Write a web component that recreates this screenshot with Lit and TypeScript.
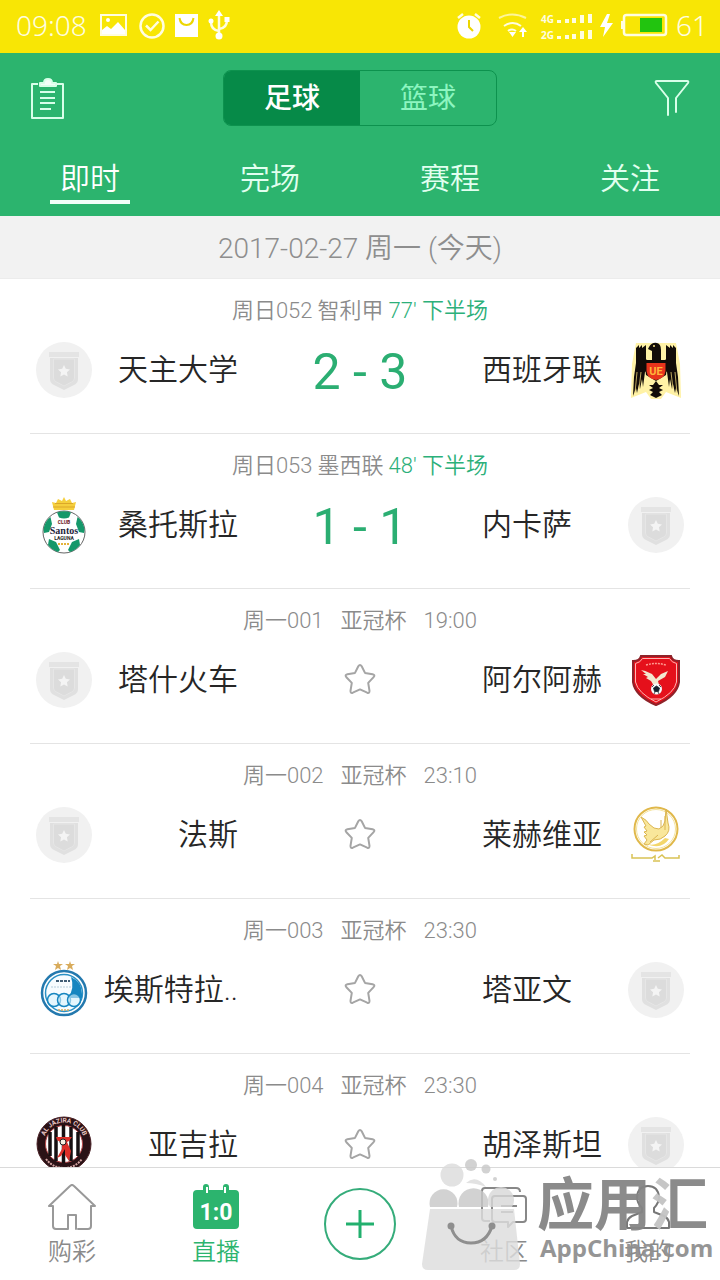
import { LitElement, html, svg, css } from "lit";
import { customElement } from "lit/decorators.js";
import { classMap } from "lit/directives/class-map.js";

interface Match {
  no: string;
  league: string;
  time: string;
  phase?: string;
  score?: string;
  home: string;
  homeCrest?: string;
  away: string;
  awayCrest?: string;
}

const MATCHES: Match[] = [
  { no: "周日052", league: "智利甲", time: "77'", phase: "下半场", score: "2 - 3", home: "天主大学", away: "西班牙联", awayCrest: "eagle" },
  { no: "周日053", league: "墨西联", time: "48'", phase: "下半场", score: "1 - 1", home: "桑托斯拉", homeCrest: "santos", away: "内卡萨" },
  { no: "周一001", league: "亚冠杯", time: "19:00", home: "塔什火车", away: "阿尔阿赫", awayCrest: "red" },
  { no: "周一002", league: "亚冠杯", time: "23:10", home: "法斯", away: "莱赫维亚", awayCrest: "gold" },
  { no: "周一003", league: "亚冠杯", time: "23:30", home: "埃斯特拉..", homeCrest: "blue", away: "塔亚文" },
  { no: "周一004", league: "亚冠杯", time: "23:30", home: "亚吉拉", homeCrest: "stripes", away: "胡泽斯坦" },
];

const CRESTS: Record<string, unknown> = {
  none: svg`
    <circle cx="28" cy="28" r="28" fill="#f1f1f1"/>
    <path d="M13 10h30v5H13z" fill="#e4e4e4"/>
    <path d="M14 16h28v21q0 4-4 6l-10 5-10-5q-4-2-4-6z" fill="#e0e0e0"/>
    <path d="M17.500 17h21v19q0 3-3 4L28 44l-7.500-4q-3-1-3-4z" fill="#dcdcdc" stroke="#e6e6e6"/>
    <path d="M28 23l1.800 3.800 4.200.6-3.100 2.900.8 4.200-3.700-2.100-3.700 2.100.8-4.200-3.100-2.900 4.200-.6z" fill="#f4f4f4"/>`,
  eagle: svg`
    <path d="M3 56L4 22 8 1h40l4 21 1 34-15-6-5 7H23l-5-7z" fill="#fff2a6"/>
    <path d="M8 6l3-3v3l3-3v3l4-3v14l2 3v8l-3 2-2 15-1-8-2 10-1-5-2 9-1-5-3 8 1-19 2-14z" fill="#120c08"/>
    <path d="M48 6l-3-3v3l-3-3v3l-4-3v14l-2 3v8l3 2 2 15 1-8 2 10 1-5 2 9 1-5 3 8-1-19-2-14z" fill="#120c08"/>
    <path d="M21 5q3-5 8-4 4 1 4 7v14h-9V9l-4-2z" fill="#120c08"/>
    <circle cx="26" cy="4" r="1" fill="#ffe98a"/>
    <path d="M9 30l-2 21M13 30l-2 17M47 30l2 21M43 30l2 17" stroke="#e9cf73" stroke-width=".8"/>
    <path d="M16 18h24l-2 15-10 6-10-6z" fill="#120c08"/>
    <path d="M18.500 21h19v8q-1 8-9.500 9-8.500-1-9.500-9z" fill="#e8341c"/>
    <text x="28" y="33" text-anchor="middle" font-size="11" font-weight="700" fill="#ffb53a">UE</text>
    <path d="M28 39l3 4h4l-4 3 4 2-4 2 3 3-6 3-6-3 3-3-4-2 4-2-4-3h4z" fill="#120c08"/>`,
  santos: svg`
    <path d="M18 13l-2-8 4 1 2-4 4 2 2-4 2 4 4-2 2 4 4-1-2 8z" fill="#f5cf3d"/>
    <path d="M17 10h22M19 6.500h18" stroke="#dca728"/>
    <circle cx="28" cy="35" r="21" fill="#fff" stroke="#666" stroke-width="1"/>
    <g fill="#15986a">
      <path d="M21 15.500q7-2.500 14 0l-2 5q-5 2-10 0z"/>
      <path d="M7.500 33q1-9 7-13l1.500 7-3 8-5 1z"/>
      <path d="M48.500 33q-1-9-7-13l-1.500 7 3 8 5 1z"/>
      <path d="M12 48l1-6 7 3 4 8-2 2q-6-2-10-7z"/>
      <path d="M44 48l-1-6-7 3-4 8 2 2q6-2 10-7z"/>
    </g>
    <g text-anchor="middle" font-weight="700">
      <text x="28" y="27" font-size="5" fill="#6b2020">CLUB</text>
      <text class="serif" x="28" y="37" font-size="10" fill="#1f2740">Santos</text>
      <text x="28" y="43" font-size="5" fill="#222">LAGUNA</text>
    </g>
    <path d="M22 47h12" stroke="#e4b33a" stroke-width="2" stroke-dasharray="2 1"/>`,
  red: svg`
    <path d="M13 4h30q1 5 8 5v21q-2 14-23 23Q7 44 5 30V9q7 0 8-5z" fill="#e5101b" stroke="#8f2229" stroke-width="2"/>
    <path d="M14.500 6.500h27q2 4 7 5v18.500q-2 11-20.500 20Q10 41 7.500 30V11.500q5-1 7-5z" fill="none" stroke="#ffb4b0" stroke-width="1"/>
    <path d="M18 13q10-3 20 0" fill="none" stroke="#ff9a8f" stroke-width="1.500" stroke-dasharray="2 1"/>
    <path d="M15 18l9 4 4 5 5-5 7-3-3 6-7 4 1 4-5 1-3-5-5-3 2-1-5-3 3 0-5-4 4 1z" fill="#f3e6cf"/>
    <circle cx="28.500" cy="37" r="5.500" fill="#f7fafb"/>
    <path d="M28.500 34l3 2-1 3.500h-4l-1-3.500zM24 35l2-2M33 35l-2-2M26 42l1-2M31 42l-1-2" fill="#15202c" stroke="#15202c" stroke-width=".8"/>
    <path d="M23 47h10" stroke="#ffb4b0" stroke-width="1"/>`,
  gold: svg`
    <circle cx="28" cy="22" r="21.500" fill="none" stroke="#e0b84a" stroke-width="2"/>
    <circle cx="28" cy="22" r="19.500" fill="none" stroke="#f5e39c" stroke-width="1"/>
    <path d="M13 10q6 3 8 7l5 4 5 1q5-2 6-8l1-12 2 14q3 8-3 13-4 4-11 4l-6 5-4-1 3-4-3-4 3-1-3-3 3-1-3-4 2-1z" fill="#f9e79b" stroke="#dbb550" stroke-width="1"/>
    <path d="M17 36q10 5 20-5l4 1q-8 12-24 4z" fill="#f3d66b"/>
    <path d="M22 35l8-7M33 13v8M37 9v14" stroke="#dbb550" fill="none"/>
    <path d="M4 47v4h20l3-2v4M51 48v3H37l-3-3-4 3M25 54h7" fill="none" stroke="#d9c254" stroke-width="1.500"/>`,
  blue: svg`
    <path d="M22-1l1 3h4l-3 2 1 4-3-2-3 2 1-4-3-2h4zM34-1l1 3h4l-3 2 1 4-3-2-3 2 1-4-3-2h4z" fill="#d8ab5b"/>
    <circle cx="28" cy="31" r="22" fill="#fff" stroke="#2479ae" stroke-width="2.500"/>
    <circle cx="28" cy="31" r="18.500" fill="#f7fcff" stroke="#2b91c5" stroke-width="1.500"/>
    <path d="M35 15q11 5 11 17v4H32q7-10 3-21z" fill="#1686c0"/>
    <path d="M20 19h14" stroke="#405d75" stroke-width="2" stroke-dasharray="3 1"/>
    <path d="M15 25h20" stroke="#b4cddb" stroke-dasharray="2 1"/>
    <g fill="#d8f2fc" fill-opacity=".6" stroke="#1686c0" stroke-width="1.500">
      <circle cx="18" cy="38" r="6.500"/><circle cx="28" cy="38" r="6.500"/><circle cx="38" cy="38" r="6.500"/>
    </g>
    <path d="M22 48h12" stroke="#d8ab5b" stroke-width="1.500" stroke-dasharray="2 1"/>`,
  stripes: svg`
    <circle cx="28" cy="27" r="27" fill="#2a1216" stroke="#4b2227" stroke-width="1"/>
    <circle cx="28" cy="27" r="18.500" fill="#fff" stroke="#b8484a" stroke-width="1"/>
    <path d="M14 15v24M20 10v34M27.500 8v38M35 10v34M42 15v24" stroke="#161012" stroke-width="3.500"/>
    <path d="M20 20h16l-3 4-2 1 4 9-2 10-4-6 0-6-4 7-4 2 5-9v-6l-5-3z" fill="#dc2f28"/>
    <circle cx="27" cy="25" r="3" fill="#f5efdf" stroke="#222"/>
    <path id="arc" d="M7.500 26a20.500 20.500 0 0 1 41 0" fill="none"/>
    <text font-size="6.500" font-weight="700" fill="#e8c5c2"><textPath href="#arc" startOffset="50%" text-anchor="middle">AL JAZIRA CLUB</textPath></text>
    <path d="M10 42q7 9 18 9t18-9" fill="none" stroke="#d5a5a3" stroke-width="2" stroke-dasharray="2 1"/>`,
};

@customElement("match-row")
export class MatchRow extends LitElement {
  static properties = { match: { attribute: false }, starred: { state: true } };
  declare match: Match;
  declare starred: boolean;

  constructor() {
    super();
    this.starred = false;
  }

  static styles = css`
    :host { display: block; padding: 0 30px; }
    .row { padding: 16px 6px 35px; border-bottom: 1px solid #e4e4e4; }
    .info {
      display: flex; justify-content: center; gap: 5px;
      font-size: 22px; line-height: 32px; color: #8b8b8b; white-space: pre;
    }
    .info.upcoming { gap: 17px; }
    .live { color: #2cb07a; }
    .teams {
      display: grid; grid-template-columns: 56px 1fr 244px 1fr 56px; align-items: center;
      margin-top: 15px; height: 56px;
      font-size: 30px; line-height: 40px; color: #262626; white-space: nowrap;
    }
    .home { display: flex; justify-content: flex-end; }
    .score { padding-top: 4px; text-align: center; font-size: 50px; line-height: 52px; font-weight: 400; color: #2bae72; }
    .crest { width: 56px; height: 56px; overflow: visible; display: block; }
    .serif { font-family: "Liberation Serif", serif; }
    .star { justify-self: center; border: 0; background: none; padding: 0; height: 36px; }
    .star svg { width: 36px; height: 36px; display: block; }
  `;

  crest(name = "none") {
    return html`<svg class="crest" viewBox="0 0 56 56" aria-hidden="true">${CRESTS[name]}</svg>`;
  }

  render() {
    const m = this.match;
    return html`
      <article class="row">
        <div class=${classMap({ info: true, upcoming: !m.score })}>
          <span>${m.no}</span><span>${m.league}</span>
          <span class=${classMap({ live: !!m.score })}>${m.time}${m.phase ? ` ${m.phase}` : ""}</span>
        </div>
        <div class="teams">
          ${this.crest(m.homeCrest)}
          <span class="home">${m.home}</span>
          ${m.score
            ? html`<span class="score">${m.score}</span>`
            : html`<button class="star" aria-label="关注" aria-pressed=${this.starred} @click=${() => (this.starred = !this.starred)}>
                <svg viewBox="0 0 36 36" fill=${this.starred ? "#2cb46e" : "none"} stroke="#a5a5a5" stroke-width="2" stroke-linejoin="round">
                  <path d="M16.300 4.300q1.700-2.600 3.400 0l3.300 6.600 7.600 1.300q3 .8 1 3l-5.400 5.700 1.300 8q.1 2.700-2.300 1.800L18 27.400l-7.200 3.300q-2.400.9-2.300-1.800l1.300-8-5.400-5.700q-2-2.200 1-3l7.600-1.300z"/>
                </svg>
              </button>`}
          <span>${m.away}</span>
          ${this.crest(m.awayCrest)}
        </div>
      </article>`;
  }
}

@customElement("status-bar")
export class StatusBar extends LitElement {
  static styles = css`
    :host {
      display: flex; justify-content: space-between; align-items: center;
      height: 53px; padding: 0 12px 4px 16px; box-sizing: border-box; background: #f8e605; color: #fffde0;
      font-family: "Noto Sans", sans-serif; font-size: 28px; font-weight: 300;
    }
    .group { display: flex; align-items: center; }
    svg { display: block; height: 32px; }
    .left svg { width: 132px; margin-left: 12px; }
    .right svg { width: 216px; margin-right: 8px; }
  `;

  render() {
    return html`
      <div class="group left">
        <span>09:08</span>
        <svg viewBox="0 0 132 32" fill="none" stroke="#fffde0" stroke-width="2" aria-hidden="true">
          <path d="M2 6h25v20H2z"/><path d="M3 25v-4l5-4 4 3 7-7 7 8v4z" fill="#fff" stroke="none"/><circle cx="9" cy="11" r="2" fill="#fff" stroke="none"/>
          <circle cx="53" cy="17" r="11.500" stroke-width="2.500"/><path d="M47 16.500l4.500 4.500 8-8.500" stroke-width="2.500"/>
          <path d="M76 5h23v23H76z" fill="#fff" stroke="none"/><path d="M80.500 9q1 7 7 7t7-7" stroke="#ecd600"/>
          <path d="M120 5v22M120 22q-8-1-8-9M120 20q8-1 8-9" stroke-width="2.500"/>
          <path d="M120 1l4 6h-8zM125.500 8h5v5h-5z" fill="#fff" stroke="none"/><circle cx="112" cy="12" r="2.500" fill="#fff" stroke="none"/><circle cx="120" cy="27" r="3.500" fill="#fff" stroke="none"/>
        </svg>
      </div>
      <div class="group right">
        <svg viewBox="0 0 216 32" fill="none" stroke="#fffde0" stroke-width="2" aria-hidden="true">
          <circle cx="17" cy="18" r="11.500" fill="#fff" stroke="none"/><path d="M17 11v7l4 4" stroke="#ecd600"/><path d="M6 9l5-4M28 9l-5-4" stroke-width="2.500"/>
          <path d="M47 9q13-7 27 0" stroke="#fdf59a"/><path d="M52 17q9-6 17 0M56 22q4-3 8 0"/>
          <path d="M57 23h7l-3.500 5zM67 23l4-5 4 5h-3v5h-2v-5z" fill="#fff" stroke="none"/>
          <g fill="#fffde0" stroke="none" font-size="10" font-weight="700"><text x="89" y="14">4G</text><text x="89" y="30">2G</text></g>
          <g stroke-width="4">
            <path d="M107 14v-3M115 14v-4M122 14V9M130 14V6M138 14V5M107 30v-3M115 30v-4M122 30v-5M130 30v-8M138 30v-9"/>
          </g>
          <path d="M155 5l-7 13h5l-2 10 10-14h-6l3-9z" fill="#fff" stroke="none"/>
          <rect x="172" y="6" width="42" height="20" rx="2.500" stroke-width="2.500"/><path d="M170 12v8" stroke-width="2"/>
          <path d="M188 9h22v14h-22z" fill="#22c40f" stroke="none"/>
        </svg>
        <span>61</span>
      </div>`;
  }
}

@customElement("tab-bar")
export class TabBar extends LitElement {
  static styles = css`
    :host { display: block; position: relative; background: #fff; border-top: 1px solid #dadada; }
    nav { display: grid; grid-template-columns: repeat(5, 1fr); height: 112px; }
    .item {
      display: flex; flex-direction: column; align-items: center; padding-top: 16px; gap: 4px;
      font-size: 24px; line-height: 32px; color: #8a8a8a; text-decoration: none;
    }
    .item svg { width: 48px; height: 48px; display: block; }
    .item.on { color: #2cb46e; }
    .digits { font-family: Roboto, sans-serif; font-size: 23px; font-weight: 700; }
    .add {
      justify-self: center; align-self: center; width: 72px; height: 72px; padding: 0;
      border: 2px solid #35ac7a; border-radius: 50%; background: #fff;
      display: grid; place-items: center;
    }
    .add svg { width: 28px; height: 28px; display: block; }
    .mark { position: absolute; right: 6px; bottom: 9px; width: 292px; height: 114px; pointer-events: none; overflow: visible; }
    .brand { font-size: 57px; font-weight: 700; }
    .site { font-family: "Open Sans", sans-serif; font-size: 24px; font-weight: 700; }
  `;

  render() {
    return html`
      <nav>
        <a class="item" href="#buy">
          <svg viewBox="0 0 48 48" fill="none" stroke="#999" stroke-width="2" stroke-linejoin="round" stroke-linecap="round">
            <path d="M30 45h10q3 0 3-3V22h4L26 2q-2-2-4 0L1 22h4v20q0 3 3 3h12V31h8v14"/>
          </svg>购彩</a>
        <a class="item on" href="#live" aria-current="page">
          <svg viewBox="0 0 48 48">
            <path d="M5 6h6V3a3 3 0 0 1 6 0v3h14V3a3 3 0 0 1 6 0v3h6q4 0 4 4v31q0 4-4 4H5q-4 0-4-4V10q0-4 4-4z" fill="#2cb46e"/>
            <path d="M15 3v6M33 3v6" stroke="#fff" stroke-width="2"/>
            <text class="digits" x="24" y="36" text-anchor="middle" fill="#fff">1:0</text>
          </svg>直播</a>
        <button class="add" aria-label="添加">
          <svg viewBox="0 0 28 28"><path d="M14 0v28M0 14h28" stroke="#22b06e" stroke-width="3"/></svg>
        </button>
        <a class="item" href="#community">
          <svg viewBox="0 0 48 48" fill="none" stroke="#888" stroke-width="2" stroke-linejoin="round">
            <path d="M10 37H5q-3 0-3-3V7q0-3 3-3h31q4 0 4 4"/>
            <path d="M15 12h28q3 0 3 3v20q0 3-3 3H33l-5 5v-5H15q-3 0-3-3V15q0-3 3-3zM21 22h16M21 28h12"/>
          </svg>社区</a>
        <a class="item" href="#me">
          <svg viewBox="0 0 48 48" fill="none" stroke="#777" stroke-width="2" stroke-linejoin="round">
            <path d="M3 44v-6q1-4 5-6l10-4v-4q-5-5-5-11Q14 2 24 2t11 11q0 6-5 11v4l10 4q4 2 5 6v6z"/>
          </svg>我的</a>
      </nav>
      <svg class="mark" viewBox="0 0 292 114" aria-hidden="true">
        <defs>
          <linearGradient id="ink" gradientUnits="userSpaceOnUse" x1="116" y1="0" x2="287" y2="0">
            <stop offset=".668" stop-color="#858585"/><stop offset=".668" stop-color="#c4c4c4"/>
            <stop offset=".77" stop-color="#c4c4c4"/><stop offset=".77" stop-color="#858585"/>
          </linearGradient>
        </defs>
        <g opacity=".82">
          <path d="M8 52h84l6 55q0 6-6 6H6q-6 0-6-6z" fill="#dedede"/>
          <g fill="#c9c9c9">
            <path d="M8 50a14 14 0 1 1 27 0zM37 50a15 15 0 1 1 29 0z"/>
            <path d="M44 26q10-9 20 4-10-4-20-4z" fill="#dcdcdc"/>
            <circle cx="30" cy="18" r="11.500" fill="#dcdcdc"/>
            <circle cx="49" cy="8" r="6"/><circle cx="64" cy="12" r="4.500"/><circle cx="73" cy="22" r="2"/>
            <path d="M68 50a13 13 0 1 1 22 0z" fill="#d8d8d8"/>
          </g>
          <circle cx="29" cy="69" r="3.500" fill="#777"/><circle cx="70" cy="69" r="3.500" fill="#777"/>
          <path d="M29 69q4 17 20 17t21-17" fill="none" stroke="#777" stroke-width="3"/>
        </g>
        <g opacity=".95">
          <text class="brand" x="115" y="68" fill="url(#ink)">应用汇</text>
          <text class="site" x="118" y="100" fill="#909090">AppChina.com</text>
        </g>
      </svg>`;
  }
}

@customElement("app-root")
export class AppRoot extends LitElement {
  static properties = { sport: { state: true }, tab: { state: true } };
  declare sport: string;
  declare tab: string;

  constructor() {
    super();
    this.sport = "足球";
    this.tab = "即时";
  }

  static styles = css`
    :host {
      display: flex; flex-direction: column; height: 100vh; overflow: hidden; background: #fff;
      font-family: Roboto, "Noto Sans CJK SC", sans-serif; font-weight: 350;
    }
    header { background: #2cb46e; }
    button { font: inherit; border: 0; padding: 0; background: none; color: inherit; cursor: pointer; }
    .top { display: grid; grid-template-columns: 1fr auto 1fr; align-items: center; padding: 17px 30px 0; }
    .icon { width: 36px; height: 44px; }
    .icon svg { width: 36px; height: 44px; display: block; }
    .filter { justify-self: end; }
    .segment { display: grid; grid-template-columns: 1fr 1fr; width: 274px; height: 56px; box-sizing: border-box; border: 1px solid #0d924e; border-radius: 8px; overflow: hidden; }
    .segment button { padding-top: 2px; font-size: 28px; line-height: 40px; font-weight: 400; color: #8df5c0; }
    .segment .on { background: #068a48; color: #fff; font-weight: 500; }
    .tabs { display: grid; grid-template-columns: repeat(4, 1fr); justify-items: center; padding: 30px 0 12px; }
    .tabs button { width: 80px; padding-top: 2px; font-size: 30px; line-height: 42px; color: #e2fff0; border-bottom: 4px solid transparent; }
    .tabs .on { color: #fff; border-color: #f2fff8; }
    .date { margin: 0; padding-top: 4px; background: #f2f2f2; border-bottom: 1px solid #ececec; text-align: center; font-size: 28px; line-height: 58px; font-weight: 350; color: #8e8e8e; }
    main { flex: 1; min-height: 0; overflow: hidden; }
  `;

  render() {
    return html`
      <status-bar></status-bar>
      <header>
        <div class="top">
          <button class="icon" aria-label="记录">
            <svg viewBox="0 0 36 44" fill="none" stroke="#d9ffe9" stroke-width="2" stroke-linejoin="round">
              <path d="M8 8H2v34h31V8h-6"/><path d="M10 16h15M10 22h15M10 27h15M10 33h11"/>
              <path d="M10 10V7h4q0-4 4-4t4 4h4v3z" fill="#f4fff9"/>
            </svg>
          </button>
          <div class="segment">
            ${["足球", "篮球"].map((s) => html`<button class=${classMap({ on: s === this.sport })} @click=${() => (this.sport = s)}>${s}</button>`)}
          </div>
          <button class="icon filter" aria-label="筛选">
            <svg viewBox="0 0 36 44" fill="none" stroke="#d9ffe9" stroke-width="2" stroke-linejoin="round" stroke-linecap="round">
              <path d="M14 39V22L2 7q-1-2 1-2h30q2 0 1 2L22 22v14"/>
            </svg>
          </button>
        </div>
        <div class="tabs">
          ${["即时", "完场", "赛程", "关注"].map((t) => html`<button class=${classMap({ on: t === this.tab })} @click=${() => (this.tab = t)}>${t}</button>`)}
        </div>
      </header>
      <h2 class="date">2017-02-27 周一 (今天)</h2>
      <main>${MATCHES.map((m) => html`<match-row .match=${m}></match-row>`)}</main>
      <tab-bar></tab-bar>`;
  }
}
